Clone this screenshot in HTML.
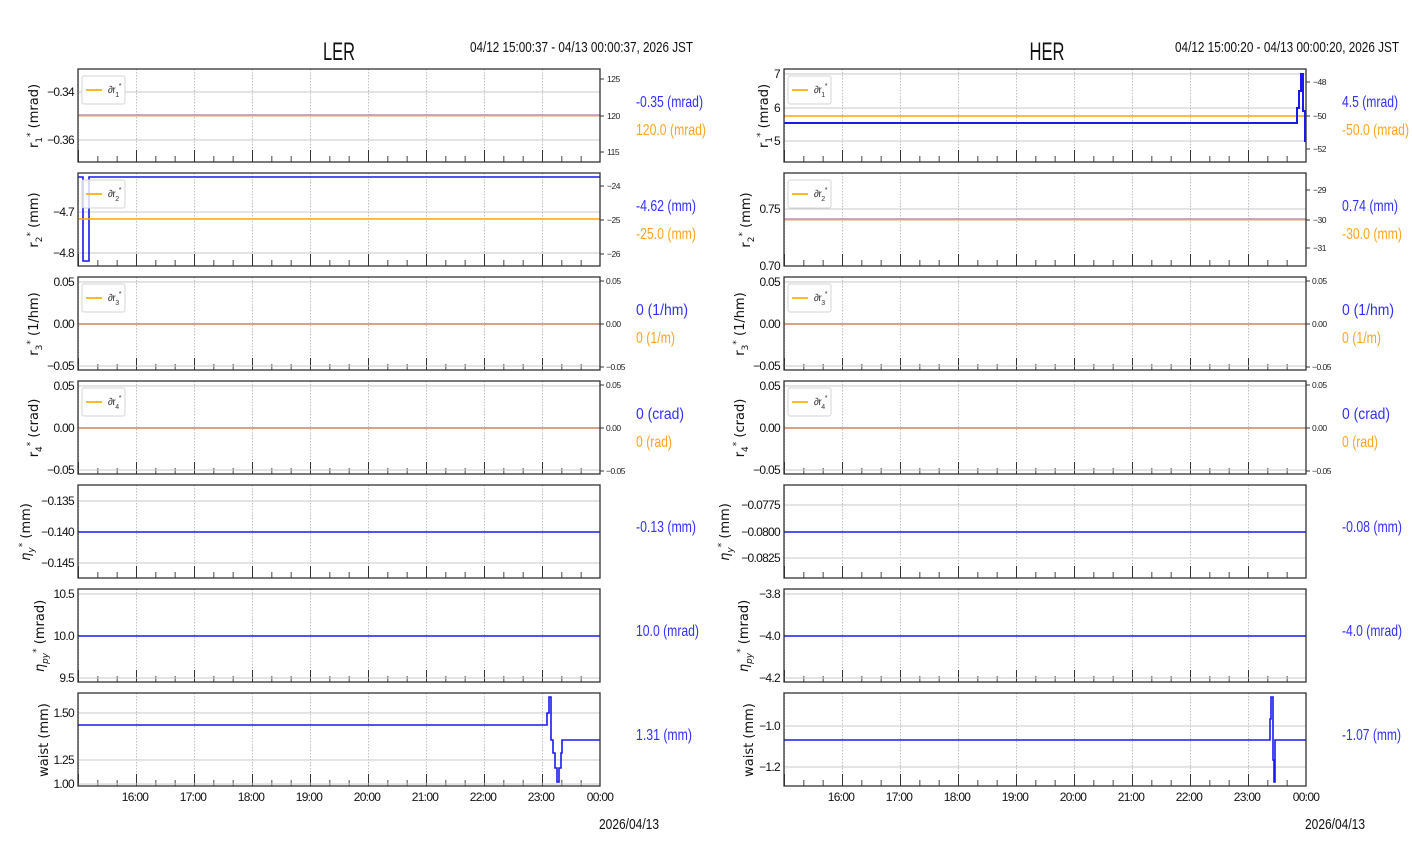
<!DOCTYPE html>
<html><head><meta charset="utf-8"><style>
html,body{margin:0;padding:0;background:#fff;width:1412px;height:864px;overflow:hidden}
svg{display:block}
.t{font-family:"Liberation Sans",sans-serif;font-size:12px;fill:#111;letter-spacing:-0.7px}
.s{font-family:"Liberation Sans",sans-serif;font-size:8.5px;fill:#222;letter-spacing:-0.5px}
.yl{font-family:"DejaVu Sans",sans-serif;font-size:13px;fill:#111}
.bl{font-family:"Liberation Sans",sans-serif;font-size:16px;fill:#3030ff}
.or{font-family:"Liberation Sans",sans-serif;font-size:16px;fill:#ffa520}
.hg{stroke:#c8c8c8;stroke-width:1}
.bline{stroke:#1a1aee;stroke-width:1.6;fill:none}
.oline{stroke:#ffa500;stroke-width:1.6;fill:none}
.sal{stroke:#d9a08a;stroke-width:2;fill:none}
.lg{fill:#fff;stroke:#d6d6d6;stroke-width:1}
.lt{font-family:"Liberation Sans",sans-serif;font-size:10px;fill:#333;letter-spacing:-0.5px}
</style></head><body>
<svg width="1412" height="864" viewBox="0 0 1412 864" xmlns="http://www.w3.org/2000/svg">
<defs>
<pattern id="vg" x="0" y="0" width="58" height="93" patternUnits="userSpaceOnUse"><line x1="0.5" y1="0" x2="0.5" y2="93" stroke="#c0c0c0" stroke-width="1" stroke-dasharray="1.5,1.5"/></pattern>
<pattern id="mt" x="0" y="0" width="19.333" height="93" patternUnits="userSpaceOnUse"><line x1="0.5" y1="87" x2="0.5" y2="93" stroke="#444" stroke-width="1"/></pattern>
<pattern id="Mt" x="0" y="0" width="58" height="93" patternUnits="userSpaceOnUse"><line x1="0.5" y1="81" x2="0.5" y2="93" stroke="#333" stroke-width="1"/></pattern>
<g id="base">
<rect x="0" y="0" width="522" height="93" fill="url(#vg)"/>
<rect x="0" y="0" width="522" height="93" fill="url(#mt)"/>
<rect x="0" y="0" width="522" height="93" fill="url(#Mt)"/>
</g>
<rect id="fr" x="0" y="0" width="522" height="93" fill="none" stroke="#333" stroke-width="1.3"/>
</defs>

<text x="339" y="60" text-anchor="middle" textLength="32" lengthAdjust="spacingAndGlyphs" style="font-family:'Liberation Sans',sans-serif;font-size:25px;fill:#111">LER</text>
<text x="470" y="52" textLength="223" lengthAdjust="spacingAndGlyphs" style="font-family:'Liberation Sans',sans-serif;font-size:15px;fill:#111">04/12 15:00:37 - 04/13 00:00:37, 2026 JST</text>
<text x="1047" y="60" text-anchor="middle" textLength="35" lengthAdjust="spacingAndGlyphs" style="font-family:'Liberation Sans',sans-serif;font-size:25px;fill:#111">HER</text>
<text x="1175" y="52" textLength="224" lengthAdjust="spacingAndGlyphs" style="font-family:'Liberation Sans',sans-serif;font-size:15px;fill:#111">04/12 15:00:20 - 04/13 00:00:20, 2026 JST</text>

<!-- ============ LER ============ -->
<g transform="translate(78,69)">
<use href="#base"/>
<line class="hg" x1="0" y1="23" x2="522" y2="23"/><line class="hg" x1="0" y1="71" x2="522" y2="71"/>
<line class="bline" x1="0" y1="46" x2="522" y2="46" style="stroke-opacity:.6"/>
<line class="sal" x1="0" y1="46.5" x2="522" y2="46.5"/>
<rect class="lg" x="4" y="7" width="43" height="28" rx="2"/><line class="oline" x1="8" y1="21" x2="24" y2="21"/><text class="lt" x="30" y="24">∂r<tspan font-size="7" dy="4">1</tspan><tspan font-size="7" dy="-9">*</tspan></text>
<use href="#fr"/>
<text class="t" x="-4" y="27" text-anchor="end">−0.34</text><text class="t" x="-4" y="75" text-anchor="end">−0.36</text>
<line x1="522" y1="10" x2="526" y2="10" stroke="#333"/><line x1="522" y1="47" x2="526" y2="47" stroke="#333"/><line x1="522" y1="83" x2="526" y2="83" stroke="#333"/>
<text class="s" x="529" y="13">125</text><text class="s" x="529" y="50">120</text><text class="s" x="529" y="86">115</text>
</g>
<g transform="translate(78,173)">
<use href="#base"/>
<line class="hg" x1="0" y1="39" x2="522" y2="39"/><line class="hg" x1="0" y1="80" x2="522" y2="80"/>
<polyline class="bline" points="0,4 5,4 5,88 11,88 11,4 522,4"/>
<line class="oline" x1="0" y1="46" x2="522" y2="46"/>
<rect class="lg" x="4" y="7" width="43" height="28" rx="2" style="fill-opacity:.8"/><line class="oline" x1="8" y1="21" x2="24" y2="21"/><text class="lt" x="30" y="24">∂r<tspan font-size="7" dy="4">2</tspan><tspan font-size="7" dy="-9">*</tspan></text>
<use href="#fr"/>
<text class="t" x="-4" y="43" text-anchor="end">−4.7</text><text class="t" x="-4" y="84" text-anchor="end">−4.8</text>
<line x1="522" y1="13" x2="526" y2="13" stroke="#333"/><line x1="522" y1="47" x2="526" y2="47" stroke="#333"/><line x1="522" y1="81" x2="526" y2="81" stroke="#333"/>
<text class="s" x="529" y="16">−24</text><text class="s" x="529" y="50">−25</text><text class="s" x="529" y="84">−26</text>
</g>
<g transform="translate(78,277)">
<use href="#base"/>
<line class="hg" x1="0" y1="5" x2="522" y2="5"/><line class="hg" x1="0" y1="89" x2="522" y2="89"/>
<line class="sal" x1="0" y1="47" x2="522" y2="47"/>
<rect class="lg" x="4" y="7" width="43" height="28" rx="2"/><line class="oline" x1="8" y1="21" x2="24" y2="21"/><text class="lt" x="30" y="24">∂r<tspan font-size="7" dy="4">3</tspan><tspan font-size="7" dy="-9">*</tspan></text>
<use href="#fr"/>
<text class="t" x="-4" y="9" text-anchor="end">0.05</text><text class="t" x="-4" y="51" text-anchor="end">0.00</text><text class="t" x="-4" y="93" text-anchor="end">−0.05</text>
<line x1="522" y1="4" x2="526" y2="4" stroke="#333"/><line x1="522" y1="47" x2="526" y2="47" stroke="#333"/><line x1="522" y1="90" x2="526" y2="90" stroke="#333"/>
<text class="s" x="528" y="7">0.05</text><text class="s" x="528" y="50">0.00</text><text class="s" x="528" y="93">−0.05</text>
</g>
<g transform="translate(78,381)">
<use href="#base"/>
<line class="hg" x1="0" y1="5" x2="522" y2="5"/><line class="hg" x1="0" y1="89" x2="522" y2="89"/>
<line class="sal" x1="0" y1="47" x2="522" y2="47"/>
<rect class="lg" x="4" y="7" width="43" height="28" rx="2"/><line class="oline" x1="8" y1="21" x2="24" y2="21"/><text class="lt" x="30" y="24">∂r<tspan font-size="7" dy="4">4</tspan><tspan font-size="7" dy="-9">*</tspan></text>
<use href="#fr"/>
<text class="t" x="-4" y="9" text-anchor="end">0.05</text><text class="t" x="-4" y="51" text-anchor="end">0.00</text><text class="t" x="-4" y="93" text-anchor="end">−0.05</text>
<line x1="522" y1="4" x2="526" y2="4" stroke="#333"/><line x1="522" y1="47" x2="526" y2="47" stroke="#333"/><line x1="522" y1="90" x2="526" y2="90" stroke="#333"/>
<text class="s" x="528" y="7">0.05</text><text class="s" x="528" y="50">0.00</text><text class="s" x="528" y="93">−0.05</text>
</g>
<g transform="translate(78,485)">
<use href="#base"/>
<line class="hg" x1="0" y1="16" x2="522" y2="16"/><line class="hg" x1="0" y1="78" x2="522" y2="78"/>
<line class="bline" x1="0" y1="47" x2="522" y2="47"/>
<use href="#fr"/>
<text class="t" x="-4" y="20" text-anchor="end">−0.135</text><text class="t" x="-4" y="51" text-anchor="end">−0.140</text><text class="t" x="-4" y="82" text-anchor="end">−0.145</text>
</g>
<g transform="translate(78,589)">
<use href="#base"/>
<line class="hg" x1="0" y1="5" x2="522" y2="5"/><line class="hg" x1="0" y1="89" x2="522" y2="89"/>
<line class="bline" x1="0" y1="47" x2="522" y2="47"/>
<use href="#fr"/>
<text class="t" x="-4" y="9" text-anchor="end">10.5</text><text class="t" x="-4" y="51" text-anchor="end">10.0</text><text class="t" x="-4" y="93" text-anchor="end">9.5</text>
</g>
<g transform="translate(78,693)">
<use href="#base"/>
<line class="hg" x1="0" y1="20" x2="522" y2="20"/><line class="hg" x1="0" y1="67" x2="522" y2="67"/><line class="hg" x1="0" y1="91" x2="522" y2="91"/>
<polyline class="bline" points="0,32 469,32 469,20 471,20 471,4 473,4 473,47 475,47 475,60 477,60 477,75 479,75 479,89 481,89 481,75 483,75 483,60 484,60 484,47 522,47"/>
<use href="#fr"/>
<text class="t" x="-4" y="24" text-anchor="end">1.50</text><text class="t" x="-4" y="71" text-anchor="end">1.25</text><text class="t" x="-4" y="95" text-anchor="end">1.00</text>
</g>
<g class="t" text-anchor="middle">
<text x="135" y="801">16:00</text><text x="193" y="801">17:00</text><text x="251" y="801">18:00</text><text x="309" y="801">19:00</text><text x="367" y="801">20:00</text><text x="425" y="801">21:00</text><text x="483" y="801">22:00</text><text x="541" y="801">23:00</text><text x="600" y="801">00:00</text>
</g>
<text x="599" y="829" textLength="60" lengthAdjust="spacingAndGlyphs" style="font-family:'Liberation Sans',sans-serif;font-size:15px;fill:#111">2026/04/13</text>
<g class="yl" text-anchor="middle">
<text transform="translate(38,116) rotate(-90)">r<tspan font-size="9" dy="4">1</tspan><tspan font-size="9" dy="-9">*</tspan><tspan dy="5">  (mrad)</tspan></text>
<text transform="translate(38,220) rotate(-90)">r<tspan font-size="9" dy="4">2</tspan><tspan font-size="9" dy="-9">*</tspan><tspan dy="5">  (mm)</tspan></text>
<text transform="translate(38,324) rotate(-90)">r<tspan font-size="9" dy="4">3</tspan><tspan font-size="9" dy="-9">*</tspan><tspan dy="5">  (1/hm)</tspan></text>
<text transform="translate(38,428) rotate(-90)">r<tspan font-size="9" dy="4">4</tspan><tspan font-size="9" dy="-9">*</tspan><tspan dy="5">  (crad)</tspan></text>
<text transform="translate(30,532) rotate(-90)"><tspan font-style="italic">η</tspan><tspan font-size="9" font-style="italic" dy="4">y</tspan><tspan font-size="9" dy="-9">*</tspan><tspan dy="5"> (mm)</tspan></text>
<text transform="translate(44,636) rotate(-90)"><tspan font-style="italic">η</tspan><tspan font-size="9" font-style="italic" dy="4">py</tspan><tspan font-size="9" dy="-9">*</tspan><tspan dy="5"> (mrad)</tspan></text>
<text transform="translate(48,740) rotate(-90)">waist (mm)</text>
</g>
<text class="bl" x="636" y="107" textLength="67" lengthAdjust="spacingAndGlyphs">-0.35 (mrad)</text><text class="or" x="636" y="135" textLength="70" lengthAdjust="spacingAndGlyphs">120.0 (mrad)</text>
<text class="bl" x="636" y="211" textLength="60" lengthAdjust="spacingAndGlyphs">-4.62 (mm)</text><text class="or" x="636" y="239" textLength="60" lengthAdjust="spacingAndGlyphs">-25.0 (mm)</text>
<text class="bl" x="636" y="315" textLength="52" lengthAdjust="spacingAndGlyphs">0 (1/hm)</text><text class="or" x="636" y="343" textLength="39" lengthAdjust="spacingAndGlyphs">0 (1/m)</text>
<text class="bl" x="636" y="419" textLength="48" lengthAdjust="spacingAndGlyphs">0 (crad)</text><text class="or" x="636" y="447" textLength="36" lengthAdjust="spacingAndGlyphs">0 (rad)</text>
<text class="bl" x="636" y="532" textLength="60" lengthAdjust="spacingAndGlyphs">-0.13 (mm)</text>
<text class="bl" x="636" y="636" textLength="63" lengthAdjust="spacingAndGlyphs">10.0 (mrad)</text>
<text class="bl" x="636" y="740" textLength="56" lengthAdjust="spacingAndGlyphs">1.31 (mm)</text>

<!-- ============ HER ============ -->
<g transform="translate(784,69)">
<use href="#base"/>
<line class="hg" x1="0" y1="5" x2="522" y2="5"/><line class="hg" x1="0" y1="39" x2="522" y2="39"/><line class="hg" x1="0" y1="72" x2="522" y2="72"/>
<line class="oline" x1="0" y1="47" x2="522" y2="47"/>
<polyline class="bline" points="0,54 513,54 513,39 515,39 515,22 517,22 517,5 519,5 519,42 521,42 521,72 522,72" style="stroke-width:2"/>
<rect class="lg" x="4" y="7" width="43" height="28" rx="2"/><line class="oline" x1="8" y1="21" x2="24" y2="21"/><text class="lt" x="30" y="24">∂r<tspan font-size="7" dy="4">1</tspan><tspan font-size="7" dy="-9">*</tspan></text>
<use href="#fr"/>
<text class="t" x="-4" y="9" text-anchor="end">7</text><text class="t" x="-4" y="43" text-anchor="end">6</text><text class="t" x="-4" y="76" text-anchor="end">5</text>
<line x1="522" y1="13" x2="526" y2="13" stroke="#333"/><line x1="522" y1="47" x2="526" y2="47" stroke="#333"/><line x1="522" y1="80" x2="526" y2="80" stroke="#333"/>
<text class="s" x="529" y="16">−48</text><text class="s" x="529" y="50">−50</text><text class="s" x="529" y="83">−52</text>
</g>
<g transform="translate(784,173)">
<use href="#base"/>
<line class="hg" x1="0" y1="36" x2="522" y2="36"/><line class="hg" x1="0" y1="93" x2="522" y2="93"/>
<line class="bline" x1="0" y1="46" x2="522" y2="46" style="stroke-opacity:.6"/>
<line class="sal" x1="0" y1="46.5" x2="522" y2="46.5"/>
<rect class="lg" x="4" y="7" width="43" height="28" rx="2"/><line class="oline" x1="8" y1="21" x2="24" y2="21"/><text class="lt" x="30" y="24">∂r<tspan font-size="7" dy="4">2</tspan><tspan font-size="7" dy="-9">*</tspan></text>
<use href="#fr"/>
<text class="t" x="-4" y="40" text-anchor="end">0.75</text><text class="t" x="-4" y="97" text-anchor="end">0.70</text>
<line x1="522" y1="17" x2="526" y2="17" stroke="#333"/><line x1="522" y1="47" x2="526" y2="47" stroke="#333"/><line x1="522" y1="75" x2="526" y2="75" stroke="#333"/>
<text class="s" x="529" y="20">−29</text><text class="s" x="529" y="50">−30</text><text class="s" x="529" y="78">−31</text>
</g>
<g transform="translate(784,277)">
<use href="#base"/>
<line class="hg" x1="0" y1="5" x2="522" y2="5"/><line class="hg" x1="0" y1="89" x2="522" y2="89"/>
<line class="sal" x1="0" y1="47" x2="522" y2="47"/>
<rect class="lg" x="4" y="7" width="43" height="28" rx="2"/><line class="oline" x1="8" y1="21" x2="24" y2="21"/><text class="lt" x="30" y="24">∂r<tspan font-size="7" dy="4">3</tspan><tspan font-size="7" dy="-9">*</tspan></text>
<use href="#fr"/>
<text class="t" x="-4" y="9" text-anchor="end">0.05</text><text class="t" x="-4" y="51" text-anchor="end">0.00</text><text class="t" x="-4" y="93" text-anchor="end">−0.05</text>
<line x1="522" y1="4" x2="526" y2="4" stroke="#333"/><line x1="522" y1="47" x2="526" y2="47" stroke="#333"/><line x1="522" y1="90" x2="526" y2="90" stroke="#333"/>
<text class="s" x="528" y="7">0.05</text><text class="s" x="528" y="50">0.00</text><text class="s" x="528" y="93">−0.05</text>
</g>
<g transform="translate(784,381)">
<use href="#base"/>
<line class="hg" x1="0" y1="5" x2="522" y2="5"/><line class="hg" x1="0" y1="89" x2="522" y2="89"/>
<line class="sal" x1="0" y1="47" x2="522" y2="47"/>
<rect class="lg" x="4" y="7" width="43" height="28" rx="2"/><line class="oline" x1="8" y1="21" x2="24" y2="21"/><text class="lt" x="30" y="24">∂r<tspan font-size="7" dy="4">4</tspan><tspan font-size="7" dy="-9">*</tspan></text>
<use href="#fr"/>
<text class="t" x="-4" y="9" text-anchor="end">0.05</text><text class="t" x="-4" y="51" text-anchor="end">0.00</text><text class="t" x="-4" y="93" text-anchor="end">−0.05</text>
<line x1="522" y1="4" x2="526" y2="4" stroke="#333"/><line x1="522" y1="47" x2="526" y2="47" stroke="#333"/><line x1="522" y1="90" x2="526" y2="90" stroke="#333"/>
<text class="s" x="528" y="7">0.05</text><text class="s" x="528" y="50">0.00</text><text class="s" x="528" y="93">−0.05</text>
</g>
<g transform="translate(784,485)">
<use href="#base"/>
<line class="hg" x1="0" y1="20" x2="522" y2="20"/><line class="hg" x1="0" y1="47" x2="522" y2="47"/><line class="hg" x1="0" y1="73" x2="522" y2="73"/>
<line class="bline" x1="0" y1="47" x2="522" y2="47"/>
<use href="#fr"/>
<text class="t" x="-4" y="24" text-anchor="end">−0.0775</text><text class="t" x="-4" y="51" text-anchor="end">−0.0800</text><text class="t" x="-4" y="77" text-anchor="end">−0.0825</text>
</g>
<g transform="translate(784,589)">
<use href="#base"/>
<line class="hg" x1="0" y1="5" x2="522" y2="5"/><line class="hg" x1="0" y1="89" x2="522" y2="89"/>
<line class="bline" x1="0" y1="47" x2="522" y2="47"/>
<use href="#fr"/>
<text class="t" x="-4" y="9" text-anchor="end">−3.8</text><text class="t" x="-4" y="51" text-anchor="end">−4.0</text><text class="t" x="-4" y="93" text-anchor="end">−4.2</text>
</g>
<g transform="translate(784,693)">
<use href="#base"/>
<line class="hg" x1="0" y1="33" x2="522" y2="33"/><line class="hg" x1="0" y1="74" x2="522" y2="74"/>
<polyline class="bline" points="0,47 486,47 486,26 487,26 487,4 489,4 489,67 490,67 490,89 491,89 491,47 522,47"/>
<use href="#fr"/>
<text class="t" x="-4" y="37" text-anchor="end">−1.0</text><text class="t" x="-4" y="78" text-anchor="end">−1.2</text>
</g>
<g class="t" text-anchor="middle">
<text x="841" y="801">16:00</text><text x="899" y="801">17:00</text><text x="957" y="801">18:00</text><text x="1015" y="801">19:00</text><text x="1073" y="801">20:00</text><text x="1131" y="801">21:00</text><text x="1189" y="801">22:00</text><text x="1247" y="801">23:00</text><text x="1306" y="801">00:00</text>
</g>
<text x="1305" y="829" textLength="60" lengthAdjust="spacingAndGlyphs" style="font-family:'Liberation Sans',sans-serif;font-size:15px;fill:#111">2026/04/13</text>
<g class="yl" text-anchor="middle">
<text transform="translate(768,116) rotate(-90)">r<tspan font-size="9" dy="4">1</tspan><tspan font-size="9" dy="-9">*</tspan><tspan dy="5">  (mrad)</tspan></text>
<text transform="translate(750,220) rotate(-90)">r<tspan font-size="9" dy="4">2</tspan><tspan font-size="9" dy="-9">*</tspan><tspan dy="5">  (mm)</tspan></text>
<text transform="translate(744,324) rotate(-90)">r<tspan font-size="9" dy="4">3</tspan><tspan font-size="9" dy="-9">*</tspan><tspan dy="5">  (1/hm)</tspan></text>
<text transform="translate(744,428) rotate(-90)">r<tspan font-size="9" dy="4">4</tspan><tspan font-size="9" dy="-9">*</tspan><tspan dy="5">  (crad)</tspan></text>
<text transform="translate(729,532) rotate(-90)"><tspan font-style="italic">η</tspan><tspan font-size="9" font-style="italic" dy="4">y</tspan><tspan font-size="9" dy="-9">*</tspan><tspan dy="5"> (mm)</tspan></text>
<text transform="translate(748,636) rotate(-90)"><tspan font-style="italic">η</tspan><tspan font-size="9" font-style="italic" dy="4">py</tspan><tspan font-size="9" dy="-9">*</tspan><tspan dy="5"> (mrad)</tspan></text>
<text transform="translate(753,740) rotate(-90)">waist (mm)</text>
</g>
<text class="bl" x="1342" y="107" textLength="56" lengthAdjust="spacingAndGlyphs">4.5 (mrad)</text><text class="or" x="1342" y="135" textLength="67" lengthAdjust="spacingAndGlyphs">-50.0 (mrad)</text>
<text class="bl" x="1342" y="211" textLength="56" lengthAdjust="spacingAndGlyphs">0.74 (mm)</text><text class="or" x="1342" y="239" textLength="60" lengthAdjust="spacingAndGlyphs">-30.0 (mm)</text>
<text class="bl" x="1342" y="315" textLength="52" lengthAdjust="spacingAndGlyphs">0 (1/hm)</text><text class="or" x="1342" y="343" textLength="39" lengthAdjust="spacingAndGlyphs">0 (1/m)</text>
<text class="bl" x="1342" y="419" textLength="48" lengthAdjust="spacingAndGlyphs">0 (crad)</text><text class="or" x="1342" y="447" textLength="36" lengthAdjust="spacingAndGlyphs">0 (rad)</text>
<text class="bl" x="1342" y="532" textLength="60" lengthAdjust="spacingAndGlyphs">-0.08 (mm)</text>
<text class="bl" x="1342" y="636" textLength="60" lengthAdjust="spacingAndGlyphs">-4.0 (mrad)</text>
<text class="bl" x="1342" y="740" textLength="59" lengthAdjust="spacingAndGlyphs">-1.07 (mm)</text>
</svg>
</body></html>
